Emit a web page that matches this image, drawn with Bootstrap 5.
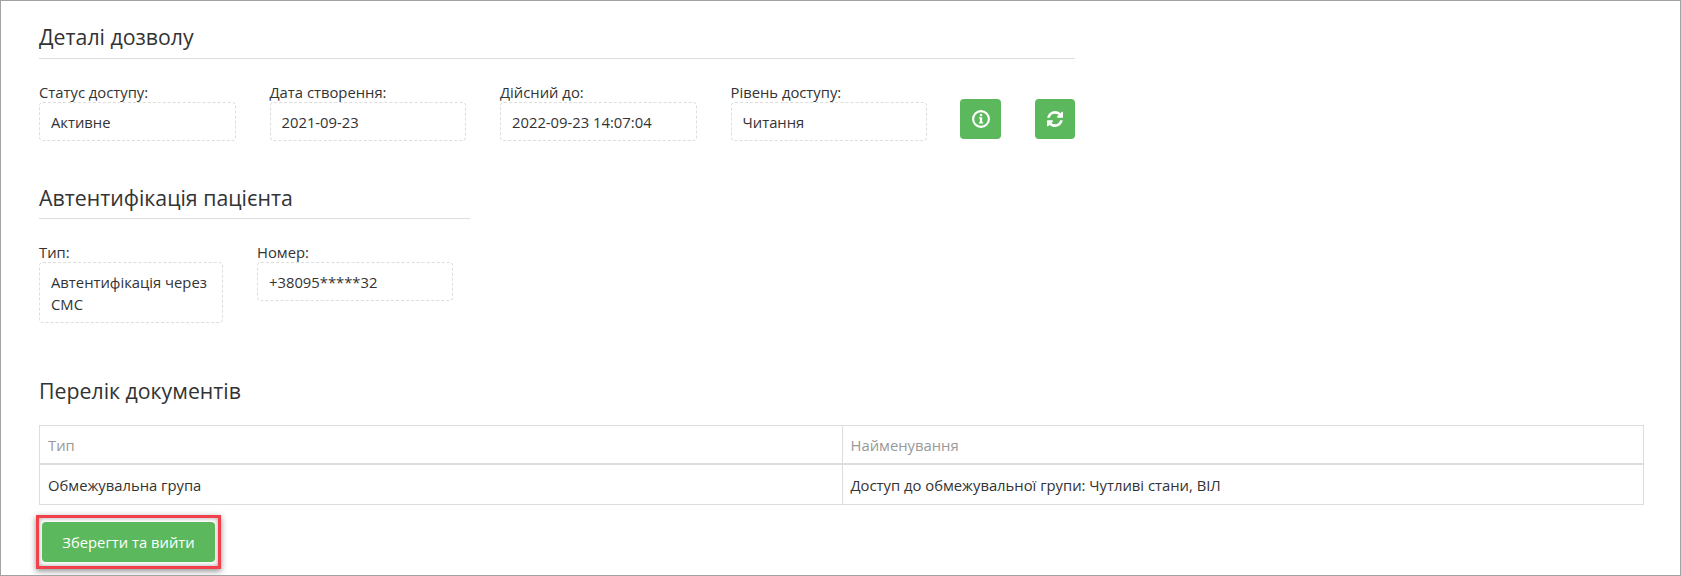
<!DOCTYPE html>
<html lang="uk">
<head>
<meta charset="utf-8">
<title>Деталі дозволу</title>
<link href="https://cdn.jsdelivr.net/npm/bootstrap@5.3.0/dist/css/bootstrap.min.css" rel="stylesheet">
<style>
html,body{height:100%;margin:0;overflow:hidden}
body{background:#fff;color:#333;font-family:"Open Sans","Liberation Sans",sans-serif;font-size:14.8px}
.frame{height:576px;border:1px solid #a3a3a3;padding:0 36px 0 38px;overflow:hidden}
.sect-title{font-size:21.3px;font-weight:400;line-height:28px;color:#333;margin:0;padding-bottom:7px}
.sect-line{border-bottom:1px solid #ddd}
.perm{width:1036px;padding-top:22px}
.auth{width:431px;margin-top:42px}
.auth .sect-title{padding-top:1px;padding-bottom:6px}
.fields{gap:34px;margin-top:24px}
.fld{width:196.5px;flex:none}
.fld-narrow{width:184px}
.fld-wide{width:196px}
.fld-label{line-height:19px;height:19px;white-space:nowrap}
.fld-box{border:1px dashed #ddd;border-radius:4px;padding:7.5px 8px 7.5px 11px;line-height:22px}
.act-wrap{gap:34px;margin-left:-1px;padding-top:16px}
.act-btn{width:41px;height:40px;padding:0;background:#5cb85c;border:0;border-radius:4px;color:#fff}
.act-btn:nth-child(2){width:40px}
.act-btn svg{display:block;margin:auto}
.docs{margin-top:54px}
.docs .sect-title{padding-bottom:20px}
.doc-table{table-layout:fixed;margin:0;border-color:#ddd;color:#333;width:100%;font-size:14.8px}
.doc-table th,.doc-table td{padding:8px 8px;line-height:20px;height:38px;font-weight:400;border:1px solid #ddd}
.doc-table th{color:#999;border-bottom-width:2px;height:38px}
.doc-table td{height:40.5px;padding-top:10px;padding-bottom:7px}
.col-a{width:802.5px}
.save-mark{display:inline-block;margin:10px 0 0 -3px;border:3px solid #f2414a;padding:4px 3px;box-shadow:0 2px 6px rgba(0,0,0,.45),inset 0 0 5px rgba(0,0,0,.35)}
.save-btn{display:block;width:173px;height:40px;background:#5cb85c;border:0;border-radius:4px;color:#fff;font-size:14.8px;font-weight:400;padding:1px 0 0}
</style>
</head>
<body>
<div class="frame">
  <section class="perm">
    <h4 class="sect-title sect-line">Деталі дозволу</h4>
    <div class="d-flex fields">
      <div class="fld"><div class="fld-label">Статус доступу:</div><div class="fld-box">Активне</div></div>
      <div class="fld"><div class="fld-label">Дата створення:</div><div class="fld-box">2021-09-23</div></div>
      <div class="fld"><div class="fld-label">Дійсний до:</div><div class="fld-box">2022-09-23 14:07:04</div></div>
      <div class="fld"><div class="fld-label">Рівень доступу:</div><div class="fld-box">Читання</div></div>
      <div class="d-flex act-wrap">
        <button class="btn act-btn" type="button" aria-label="Інформація">
          <svg width="18" height="18" viewBox="0 0 18 18"><circle cx="9" cy="9" r="7.9" fill="none" stroke="#fff" stroke-width="2.1"/><rect x="7.9" y="3.9" width="2.3" height="2.2" fill="#fff"/><path d="M6.9 7.2h3.3v5h1v1.3H6.9v-1.3h1v-3.7h-1z" fill="#fff"/></svg>
        </button>
        <button class="btn act-btn" type="button" aria-label="Оновити">
          <svg width="16" height="16" viewBox="128 128 1536 1536"><path fill="#fff" d="M1639 1056q0 5-1 7-64 268-268 434.5t-478 166.5q-146 0-282.5-55t-243.5-157l-129 129q-19 19-45 19t-45-19-19-45v-448q0-26 19-45t45-19h448q26 0 45 19t19 45-19 45l-137 137q71 66 161 102t187 36q134 0 250-65t186-179q11-17 53-117 8-23 30-23h192q13 0 22.5 9.5t9.5 22.5zm25-800v448q0 26-19 45t-45 19h-448q-26 0-45-19t-19-45 19-45l138-138q-148-137-349-137-134 0-250 65t-186 179q-11 17-53 117-8 23-30 23h-199q-13 0-22.5-9.5t-9.5-22.5v-7q65-268 270-434.5t480-166.5q146 0 284 55.5t245 156.5l130-129q19-19 45-19t45 19 19 45z"/></svg>
        </button>
      </div>
    </div>
  </section>
  <section class="auth">
    <h4 class="sect-title sect-line">Автентифікація пацієнта</h4>
    <div class="d-flex fields">
      <div class="fld fld-narrow"><div class="fld-label">Тип:</div><div class="fld-box">Автентифікація через СМС</div></div>
      <div class="fld fld-wide"><div class="fld-label">Номер:</div><div class="fld-box">+38095*****32</div></div>
    </div>
  </section>
  <section class="docs">
    <h4 class="sect-title">Перелік документів</h4>
    <table class="table table-bordered doc-table">
      <thead><tr><th class="col-a">Тип</th><th>Найменування</th></tr></thead>
      <tbody><tr><td>Обмежувальна група</td><td>Доступ до обмежувальної групи: Чутливі стани, ВІЛ</td></tr></tbody>
    </table>
    <div class="save-mark"><button class="btn save-btn" type="button">Зберегти та вийти</button></div>
  </section>
</div>
<script src="https://cdn.jsdelivr.net/npm/bootstrap@5.3.0/dist/js/bootstrap.bundle.min.js"></script>
</body>
</html>
